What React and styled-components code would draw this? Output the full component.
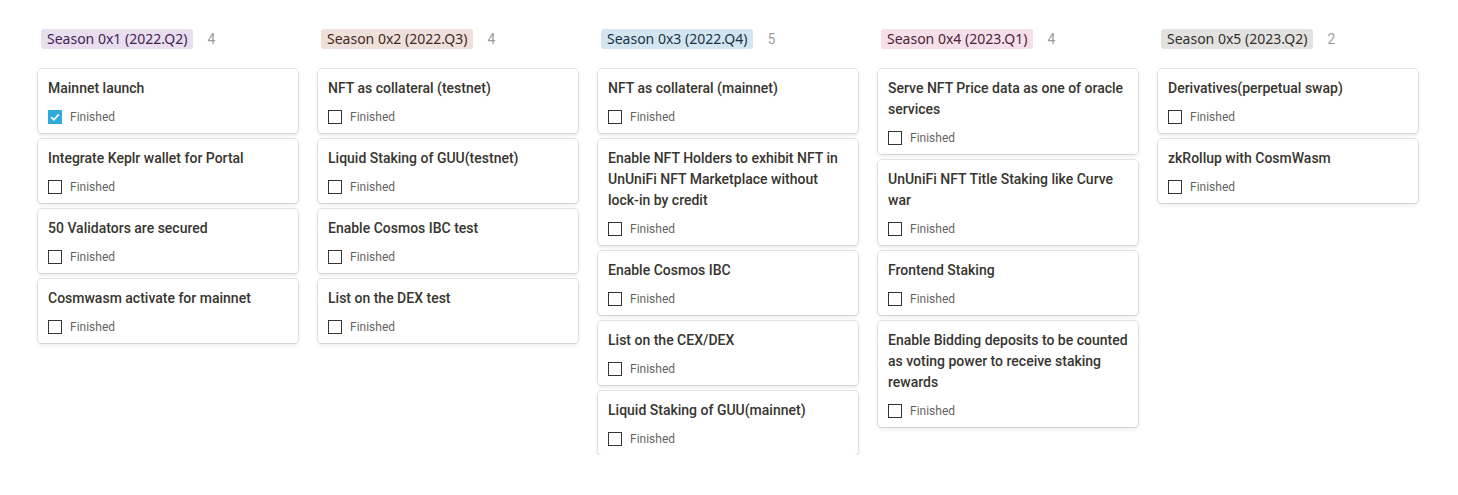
import React from "react";
import styled, { createGlobalStyle } from "styled-components";

const GlobalStyle = createGlobalStyle`
  body {
    margin: 0;
    background: #ffffff;
    font-family: Roboto, "Noto Sans", sans-serif;
    color: rgb(55, 53, 47);
  }
`;

const tagColors = {
  purple: { bg: "rgb(232, 222, 238)", fg: "rgb(65, 36, 84)" },
  brown: { bg: "rgb(238, 224, 218)", fg: "rgb(68, 42, 30)" },
  blue: { bg: "rgb(211, 229, 239)", fg: "rgb(24, 51, 71)" },
  pink: { bg: "rgb(245, 224, 233)", fg: "rgb(76, 35, 55)" },
  gray: { bg: "rgb(227, 226, 224)", fg: "rgb(50, 48, 44)" },
};

const seasons = [
  {
    name: "Season 0x1 (2022.Q2)",
    color: "purple",
    items: [
      { title: "Mainnet launch", done: true },
      { title: "Integrate Keplr wallet for Portal" },
      { title: "50 Validators are secured" },
      { title: "Cosmwasm activate for mainnet" },
    ],
  },
  {
    name: "Season 0x2 (2022.Q3)",
    color: "brown",
    items: [
      { title: "NFT as collateral (testnet)" },
      { title: "Liquid Staking of GUU(testnet)" },
      { title: "Enable Cosmos IBC test" },
      { title: "List on the DEX test" },
    ],
  },
  {
    name: "Season 0x3 (2022.Q4)",
    color: "blue",
    items: [
      { title: "NFT as collateral (mainnet)" },
      {
        title:
          "Enable NFT Holders to exhibit NFT in UnUniFi NFT Marketplace without lock-in by credit",
      },
      { title: "Enable Cosmos IBC" },
      { title: "List on the CEX/DEX" },
      { title: "Liquid Staking of GUU(mainnet)" },
    ],
  },
  {
    name: "Season 0x4 (2023.Q1)",
    color: "pink",
    items: [
      { title: "Serve NFT Price data as one of oracle services" },
      { title: "UnUniFi NFT Title Staking like Curve war" },
      { title: "Frontend Staking" },
      {
        title:
          "Enable Bidding deposits to be counted as voting power to receive staking rewards",
      },
    ],
  },
  {
    name: "Season 0x5 (2023.Q2)",
    color: "gray",
    items: [
      { title: "Derivatives(perpetual swap)" },
      { title: "zkRollup with CosmWasm" },
    ],
  },
];

const Board = styled.div`
  display: flex;
  align-items: flex-start;
  gap: 20px;
  padding: 29px 38px 0;
`;

const Column = styled.div`
  width: 260px;
  flex-shrink: 0;
`;

const ColumnHeader = styled.div`
  display: flex;
  align-items: center;
  height: 20px;
  padding-left: 3px;
  margin-bottom: 20px;
`;

const Tag = styled.span`
  display: inline-flex;
  align-items: center;
  height: 20px;
  padding: 0 6px;
  border-radius: 3px;
  font-family: "Noto Sans", sans-serif;
  font-size: 14px;
  line-height: 20px;
  white-space: nowrap;
  background: ${(p) => tagColors[p.$color].bg};
  color: ${(p) => tagColors[p.$color].fg};
`;

const Count = styled.span`
  margin-left: 14px;
  font-size: 14px;
  color: rgba(55, 53, 47, 0.5);
`;

const CardList = styled.div`
  display: flex;
  flex-direction: column;
  gap: 6px;
`;

const Card = styled.div`
  background: #ffffff;
  border-radius: 4px;
  padding: 9px 10px 6px;
  box-shadow: rgba(15, 15, 15, 0.1) 0 0 0 1px, rgba(15, 15, 15, 0.1) 0 2px 4px;
`;

const Title = styled.div`
  font-size: 14px;
  font-weight: 500;
  line-height: 21px;
  color: rgb(55, 53, 47);
`;

const CheckRow = styled.div`
  display: flex;
  align-items: center;
  gap: 8px;
  height: 21px;
  margin-top: 7px;
`;

const Box = styled.span`
  display: inline-flex;
  align-items: center;
  justify-content: center;
  width: 14px;
  height: 14px;
  box-sizing: border-box;
  border: ${(p) => (p.$checked ? "none" : "1.5px solid rgb(55, 53, 47)")};
  background: ${(p) => (p.$checked ? "rgb(46, 170, 220)" : "#fff")};
`;

const CheckLabel = styled.span`
  font-size: 12px;
  color: rgba(55, 53, 47, 0.8);
`;

const Checkbox = ({ checked }) => (
  <Box $checked={checked}>
    {checked && (
      <svg width="12" height="12" viewBox="0 0 12 12">
        <path
          d="M2.2 6.2 L4.8 8.8 L9.8 3.4"
          fill="none"
          stroke="#fff"
          strokeWidth="1.7"
        />
      </svg>
    )}
  </Box>
);

export default function App() {
  return (
    <>
      <GlobalStyle />
      <Board>
        {seasons.map((s, i) => (
          <Column key={`c-${i}`}>
            <ColumnHeader>
              <Tag $color={s.color}>{s.name}</Tag>
              <Count>{s.items.length}</Count>
            </ColumnHeader>
            <CardList>
              {s.items.map((item, j) => (
                <Card key={`i-${j}`}>
                  <Title>{item.title}</Title>
                  <CheckRow>
                    <Checkbox checked={item.done} />
                    <CheckLabel>Finished</CheckLabel>
                  </CheckRow>
                </Card>
              ))}
            </CardList>
          </Column>
        ))}
      </Board>
    </>
  );
}
